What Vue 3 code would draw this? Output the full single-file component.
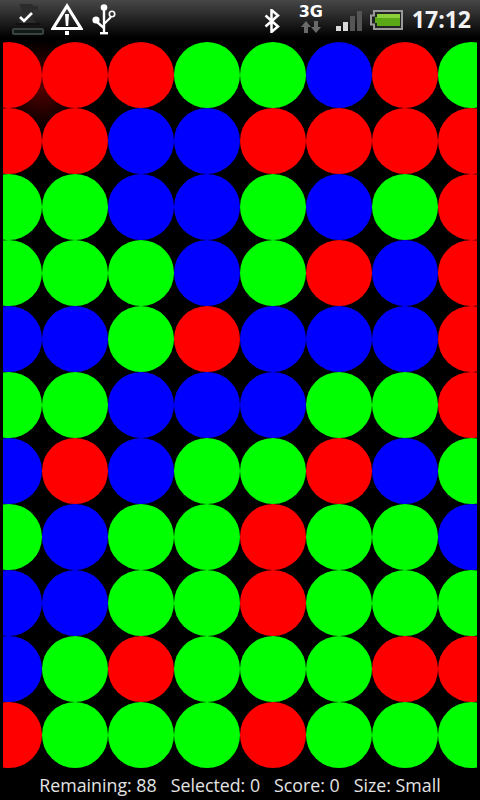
<script setup>
const rows = [
  'RRRGGBRG',
  'RRBBRRRR',
  'GGBBGBGR',
  'GGGBGRBR',
  'BBGRBBBR',
  'GGBBBGGR',
  'BRBGGRBG',
  'GBGGRGGB',
  'BBGGRGGG',
  'BGRGGGRR',
  'RGGGRGGG',
]
const colourClass = { R: 'red', G: 'green', B: 'blue' }
const balls = rows.flatMap((row, r) =>
  row.split('').map((c, i) => ({ id: `${r}-${i}`, cls: colourClass[c] }))
)
</script>

<template>
  <div class="screen">
    <header class="status">
      <div class="group left">
        <svg class="ic-task" viewBox="0 0 34 32" width="34" height="32">
          <path d="M8 1h12l3 2h4v4h-5v9l4 5H6l4-5V5z" fill="#2c2c2c" />
          <path d="M9 15l4 4 8-8" fill="none" stroke="#fff" stroke-width="2.6" transform="translate(0 -1)" />
          <rect x="5" y="20" width="24" height="2" fill="#111" />
          <rect x="1" y="25" width="32" height="7" rx="2" fill="#3a4240" />
          <rect x="3" y="27" width="28" height="3" fill="#121a18" />
        </svg>
        <svg class="ic-warn" viewBox="0 0 32 32" width="32" height="32">
          <path d="M16 3L2 25.5h28z" fill="none" stroke="#fff" stroke-width="3.2" stroke-linejoin="miter" />
          <path d="M14 11h4l-.8 12h-2.400z" fill="#fff" />
          <rect x="14" y="28" width="4" height="4" fill="#fff" />
        </svg>
        <svg class="ic-usb" viewBox="0 0 24 31" width="24" height="31">
          <circle cx="12" cy="3.500" r="3.300" fill="#fff" />
          <path d="M12 4v25" stroke="#fff" stroke-width="2.400" />
          <rect x="8" y="28" width="8" height="2.400" fill="#fff" />
          <circle cx="4" cy="16" r="3.600" fill="#fff" />
          <path d="M5 18l7 6" stroke="#fff" stroke-width="2.400" fill="none" />
          <circle cx="20" cy="10" r="2.700" fill="none" stroke="#fff" stroke-width="1.600" />
          <path d="M19 13l-7 7" stroke="#fff" stroke-width="2.200" fill="none" />
        </svg>
      </div>
      <div class="group right">
        <svg class="ic-bt" viewBox="0 0 16 24" width="16" height="24">
          <path d="M1.500 6.500L14 17.500 7.500 23V1L14 6.500 1.500 17.500" fill="none" stroke="#fff" stroke-width="2.500" />
        </svg>
        <div class="net">
          <span class="net-label">3G</span>
          <svg viewBox="0 0 22 12" width="22" height="12">
            <path d="M6 0l5 6H8v6H4V6H1z" fill="#6a6a6a" />
            <path d="M16 12l-5-6h3V0h4v6h3z" fill="#6a6a6a" />
          </svg>
        </div>
        <svg class="ic-signal" viewBox="0 0 26 20" width="26" height="20">
          <rect x="0" y="15" width="5" height="5" fill="#d8d8d8" />
          <rect x="7" y="11" width="5" height="9" fill="#d8d8d8" />
          <rect x="14" y="5" width="5" height="15" fill="#555" />
          <rect x="21" y="0" width="5" height="20" fill="#555" />
        </svg>
        <svg class="ic-batt" viewBox="0 0 33 20" width="33" height="20">
          <path d="M4 1h28v18H4v-4.500H1v-9h3z" fill="#222" stroke="#9a9a9a" stroke-width="2" />
          <path d="M7 4h23v12H7v-3H5V7h2z" fill="#5aa815" />
          <rect x="7" y="4" width="23" height="4" fill="#8bd03a" />
        </svg>
        <span class="time">17:12</span>
      </div>
    </header>

    <main class="board">
      <div class="balls">
        <div v-for="b in balls" :key="b.id" class="ball" :class="b.cls"></div>
      </div>
    </main>

    <footer class="info">
      <span>Remaining: 88</span>
      <span>Selected: 0</span>
      <span>Score: 0</span>
      <span>Size: Small</span>
    </footer>
  </div>
</template>

<style>
html, body { margin: 0; background: #000; }
</style>

<style scoped>
.screen {
  width: 480px;
  height: 800px;
  background: #000;
  display: flex;
  flex-direction: column;
  overflow: hidden;
  font-family: "Open Sans", "Liberation Sans", sans-serif;
}
.status {
  height: 38px;
  flex: none;
  margin-bottom: 4px;
  display: flex;
  justify-content: space-between;
  align-items: center;
  background: linear-gradient(#474747 0, #2b2b2b 40%, #0a0a0a 85%, #000 100%);
}
.group { display: flex; align-items: center; }
.left { padding-left: 11px; }
.ic-warn { margin-left: 6px; }
.ic-usb { margin-left: 9px; }
.right { padding-right: 9px; }
.ic-bt { margin-top: 3px; }
.net {
  margin-left: 20px;
  width: 22px;
  height: 27px;
  display: flex;
  flex-direction: column;
  align-items: center;
  justify-content: space-between;
  margin-top: 1px;
}
.net svg { display: block; flex: none; }
.net-label {
  font-family: "DejaVu Sans", sans-serif;
  font-weight: 700;
  font-size: 16px;
  line-height: 12px;
  color: #fff;
}
.ic-signal { margin-left: 14px; margin-right: -2px; margin-top: 3px; }
.ic-batt { margin-left: 10px; margin-top: 2px; }
.time {
  margin-left: 9px;
  font-size: 23px;
  font-weight: 700;
  line-height: 38px;
  color: #f2f2f2;
}
.board {
  flex: none;
  height: 726px;
  margin: 0 3px;
  overflow: hidden;
  background: radial-gradient(circle 46px at 38px 44px, #560000, #000);
}
.balls {
  width: 528px;
  margin-left: -27px;
  display: grid;
  grid-template-columns: repeat(8, 66px);
  grid-auto-rows: 66px;
}
.ball { border-radius: 50%; }
.red { background: #f00; }
.green { background: #0f0; }
.blue { background: #00f; }
.info {
  flex: 1;
  display: flex;
  justify-content: center;
  align-items: center;
  gap: 14px;
  padding-top: 2px;
  color: #e4e4e4;
  font-size: 17.8px;
}
</style>
